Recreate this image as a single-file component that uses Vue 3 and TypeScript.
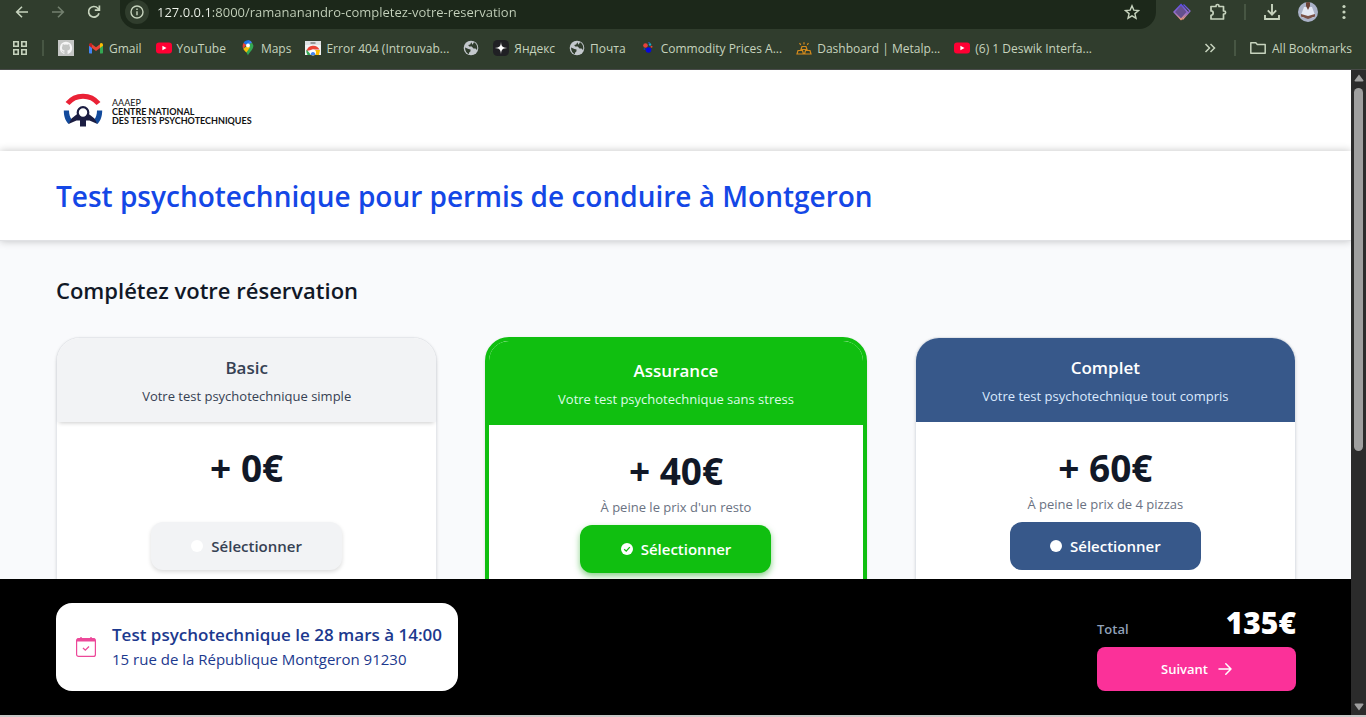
<script setup lang="ts">
import { ref } from 'vue'

interface Bookmark {
  icon: string
  label: string
}

interface Plan {
  id: string
  name: string
  tagline: string
  price: string
  note: string
}

const address = ref('127.0.0.1:8000/ramananandro-completez-votre-reservation')
const selected = ref('assurance')

const bookmarks: Bookmark[] = [
  { icon: 'github', label: '' },
  { icon: 'gmail', label: 'Gmail' },
  { icon: 'youtube', label: 'YouTube' },
  { icon: 'maps', label: 'Maps' },
  { icon: 'store', label: 'Error 404 (Introuvab...' },
  { icon: 'globe', label: '' },
  { icon: 'yandex', label: 'Яндекс' },
  { icon: 'globe', label: 'Почта' },
  { icon: 'dots', label: 'Commodity Prices A...' },
  { icon: 'gold', label: 'Dashboard | Metalp...' },
  { icon: 'youtube', label: '(6) 1 Deswik Interfa...' },
]

const plans: Plan[] = [
  { id: 'basic', name: 'Basic', tagline: 'Votre test psychotechnique simple', price: '+ 0€', note: '' },
  { id: 'assurance', name: 'Assurance', tagline: 'Votre test psychotechnique sans stress', price: '+ 40€', note: "À peine le prix d'un resto" },
  { id: 'complet', name: 'Complet', tagline: 'Votre test psychotechnique tout compris', price: '+ 60€', note: 'À peine le prix de 4 pizzas' },
]
</script>

<template>
  <div class="window">
    <header class="chrome">
      <div class="toolbar">
        <button class="tool" aria-label="Back">
          <svg width="16" height="16" viewBox="0 0 16 16" fill="none" stroke="currentColor" stroke-width="1.6"><path d="M14 8H3M8 2.7 2.7 8 8 13.3" /></svg>
        </button>
        <button class="tool dim" aria-label="Forward">
          <svg width="16" height="16" viewBox="0 0 16 16" fill="none" stroke="currentColor" stroke-width="1.6"><path d="M2 8h11M8 2.7 13.3 8 8 13.3" /></svg>
        </button>
        <button class="tool" aria-label="Reload">
          <svg width="16" height="16" viewBox="0 0 16 16" fill="none" stroke="currentColor" stroke-width="1.7"><path d="M13 9.2A5.3 5.3 0 1 1 11.8 4.2L13.4 5.8" /><path d="M13.4 1.6v4.6H8.8" /></svg>
        </button>
        <div class="omnibox">
          <button class="site-info" aria-label="Site information">
            <svg width="14" height="14" viewBox="0 0 14 14" fill="none" stroke="currentColor" stroke-width="1.4"><circle cx="7" cy="7" r="6" /><path d="M7 6.2v4M7 3.4v1.5" /></svg>
          </button>
          <input v-model="address" class="url" type="text" aria-label="Address" />
          <button class="tool star" aria-label="Bookmark this page">
            <svg width="16" height="16" viewBox="0 0 16 16" fill="none" stroke="currentColor" stroke-width="1.4"><path d="m8 1.8 1.8 4.3 4.7.4-3.6 3.1 1.1 4.6L8 11.8l-4 2.4 1.1-4.6L1.500 6.500l4.700-.4z" /></svg>
          </button>
        </div>
        <div class="extensions">
          <button class="tool" aria-label="Extension">
            <svg width="18" height="18" viewBox="0 0 18 18" fill="none">
              <defs><linearGradient id="ext" x1="0" y1="0" x2="0" y2="1"><stop offset="0" stop-color="#5b4bea" /><stop offset=".6" stop-color="#9a72c8" /><stop offset="1" stop-color="#f09a78" /></linearGradient></defs>
              <path d="M10.500 1.500 17 8 9.500 16.500" stroke="url(#ext)" stroke-width="1.300" />
              <path d="M8 1.500 14.500 9 8 16.500 1 9z" fill="#65508e" stroke="url(#ext)" stroke-width="1.500" />
            </svg>
          </button>
          <button class="tool" aria-label="Extensions">
            <svg width="18" height="18" viewBox="0 0 18 18" fill="none" stroke="currentColor" stroke-width="1.700" stroke-linejoin="round"><path d="M2 3.500h5V3a1.500 1.500 0 0 1 3 0v.5h4.500V8h.6a1.500 1.500 0 0 1 0 3h-.6v5H2v-3.700a2.200 2.200 0 0 0 0-4.400z" /></svg>
          </button>
          <span class="divider"></span>
          <button class="tool" aria-label="Downloads">
            <svg width="18" height="18" viewBox="0 0 18 18" fill="none" stroke="currentColor" stroke-width="1.900"><path d="M9 1v10.500M4.800 7.400 9 11.600l4.200-4.200M2 12v4h14v-4" /></svg>
          </button>
          <button class="tool" aria-label="Profile">
            <svg width="20" height="20" viewBox="0 0 20 20">
              <defs><clipPath id="face"><circle cx="10" cy="10" r="10" /></clipPath></defs>
              <g clip-path="url(#face)"><path fill="#aab2c8" d="M0 0h20v20H0z" /><path fill="#e4e8f4" d="M6 5h8l3 8-2 3H5l-2-3z" /><path fill="#6b4236" d="M8 0h4v4l-2 4-2-4z" /><path fill="#7a5147" d="m3 12 7 2 7-2v2.500L10 17l-7-2.500z" /></g>
            </svg>
          </button>
          <button class="tool" aria-label="Menu">
            <svg width="18" height="18" viewBox="0 0 18 18" fill="currentColor"><circle cx="9" cy="3.500" r="1.600" /><circle cx="9" cy="9" r="1.600" /><circle cx="9" cy="14.500" r="1.600" /></svg>
          </button>
        </div>
      </div>

      <nav class="bookmarks" aria-label="Bookmarks">
        <button class="tool apps" aria-label="Tabs">
          <svg width="14" height="14" viewBox="0 0 14 14" fill="none" stroke="currentColor" stroke-width="1.600"><path d="M.8.8h4.400v4.400H.8zM8.800.8h4.400v4.400H8.800zM.8 8.800h4.400v4.400H.8zM8.800 8.800h4.400v4.400H8.800z" /></svg>
        </button>
        <span class="divider"></span>
        <a v-for="(mark, i) in bookmarks" :key="i" class="mark" href="#" :aria-label="mark.label || mark.icon">
          <svg v-if="mark.icon === 'github'" width="16" height="16" viewBox="0 0 16 16"><path fill="#c4c6c4" d="M0 0h16v16H0z" /><path fill="#f6f6f6" d="M8 1.800a6.300 6.300 0 0 0-2 12.200c.3 0 .4-.1.400-.3v-1.200c-1.700.4-2.100-.8-2.100-.8-.3-.7-.7-.9-.7-.9-.6-.4 0-.4 0-.4.600 0 1 .6 1 .6.500 1 1.400.7 1.800.500 0-.4.200-.7.400-.8-1.400-.2-2.900-.7-2.900-3.100 0-.7.300-1.300.7-1.700 0-.2-.3-.8.1-1.700 0 0 .5-.2 1.700.6a6 6 0 0 1 3.200 0c1.200-.8 1.700-.6 1.700-.6.4.9.1 1.500.1 1.700.4.400.7 1 .7 1.700 0 2.400-1.500 2.900-2.900 3.100.2.200.4.600.4 1.200v1.800c0 .2.100.4.400.3A6.300 6.300 0 0 0 8 1.800z" /></svg>
          <svg v-else-if="mark.icon === 'gmail'" width="16" height="16" viewBox="0 0 16 16"><path fill="#4285f4" d="M1 5v7.500c0 .6.400 1 1 1h2V7z" /><path fill="#34a853" d="M15 5v7.500c0 .6-.4 1-1 1h-2V7z" /><path fill="#ea4335" d="M4 4.200 8 7.200l4-3v3.700l-4 3-4-3z" /><path fill="#c5221f" d="M1 5c0-2 1.800-2.600 3-1.500v4.400L1 5.700z" /><path fill="#fbbc04" d="M15 5c0-2-1.800-2.600-3-1.500v4.400l3-2.200z" /></svg>
          <svg v-else-if="mark.icon === 'youtube'" width="16" height="16" viewBox="0 0 16 16"><rect y="2.500" width="16" height="11" rx="3" fill="#ff0033" /><path fill="#fff" d="M6.400 5.700v4.600L10.500 8z" /></svg>
          <svg v-else-if="mark.icon === 'maps'" width="16" height="16" viewBox="0 0 16 16"><path fill="#34a853" d="M3 8.200C4 10.300 7 11.800 8 15.600c1-3.800 5.400-5.600 5.400-10.200L11.900 2.500z" /><path fill="#fbbc04" d="M6.200 6.800 3.300 9c1 1.600 2.200 2.400 3 3.500L10.300 7z" /><path fill="#4285f4" d="m8 5 4-2.500C11 1 9.500.3 8 .3L6 4z" /><path fill="#1a73e8" d="M8 .3C6 .3 4.300 1.300 3.500 2.900L6 5.500 10 1z" /><path fill="#ea4335" d="M3.500 2.900C2.300 5 2.500 7 3.200 8.700L6.400 5z" /><circle cx="8" cy="5.500" r="2" fill="#fff" /></svg>
          <svg v-else-if="mark.icon === 'store'" width="16" height="16" viewBox="0 0 16 16"><path fill="#f1f3f4" d="M0 1h16v14H0z" /><path fill="#dfe1e4" d="M0 1h16v4H0z" /><path stroke="#666" stroke-width="1.200" d="M5.500 3h5" /><path fill="#ea4335" d="M1.500 11a7 7 0 0 1 13-1.500H8z" /><path fill="#34a853" d="M1.500 9.500 6 15H2.500a6 6 0 0 1-1-5.500z" /><path fill="#fbbc04" d="M15 10H9l-1 5h6z" /><circle cx="8" cy="12.500" r="3" fill="#fff" /><path fill="#4285f4" d="M5.800 15a2.300 2.300 0 1 1 4.400 0z" /></svg>
          <svg v-else-if="mark.icon === 'globe'" width="16" height="16" viewBox="0 0 16 16"><circle cx="8" cy="8" r="7.300" fill="#c3c8cc" /><path fill="#303d2d" d="M2 7.500 5.500 9l2 .5v1.700l-1.500 1.500v1.500C3.500 13 2 11 2 7.500zM8.300 2.200 7.200 4.500l-2 .6 1 1.500 2.500-.2 1.800 2h2l1.500 1.500c1-3.200-.7-6.600-3-7.700L9.500 4.800z" /></svg>
          <svg v-else-if="mark.icon === 'yandex'" width="16" height="16" viewBox="0 0 16 16"><rect width="16" height="16" rx="4.500" fill="#202024" /><path fill="#fff" d="M8 1.800c.4 4.800 1.400 5.800 6.200 6.200-4.800.4-5.800 1.400-6.200 6.200C7.600 9.400 6.600 8.400 1.800 8 6.600 7.600 7.600 6.600 8 1.800z" /></svg>
          <svg v-else-if="mark.icon === 'dots'" width="16" height="16" viewBox="0 0 16 16"><circle cx="5.500" cy="5.500" r="2.300" fill="#e8413c" /><circle cx="8.500" cy="10" r="2.800" fill="#0808dc" /><circle cx="10" cy="4.500" r="1.200" fill="#16a6c9" /><circle cx="11.500" cy="6.800" r="1" fill="#e8413c" /><circle cx="4.500" cy="9" r="1" fill="#0b43b0" /><circle cx="9" cy="2.800" r=".8" fill="#1f60dc" /></svg>
          <svg v-else width="16" height="16" viewBox="0 0 16 16" fill="none" stroke="#d48a1c" stroke-width="1.200"><path d="m5 9.500 1-3h4l1 3zM1 14l1-3.500h4.500l1 3.500zM8.500 14l1-3.500H14l1 3.500zM8 4.500V2.200M4.800 4.800 3.500 3.200M11.200 4.800l1.300-1.600" /></svg>
          <span v-if="mark.label">{{ mark.label }}</span>
        </a>
        <button class="tool more" aria-label="More bookmarks">
          <svg width="12" height="12" viewBox="0 0 12 12" fill="none" stroke="currentColor" stroke-width="1.500"><path d="m1.500 2 4 4-4 4M6.500 2l4 4-4 4" /></svg>
        </button>
        <span class="divider"></span>
        <a class="mark all" href="#">
          <svg width="16" height="16" viewBox="0 0 16 16" fill="none" stroke="currentColor" stroke-width="1.500" stroke-linejoin="round"><path d="M.8 13.200V2.800h5l1.500 1.700h7.900v8.700z" /></svg>
          <span>All Bookmarks</span>
        </a>
      </nav>
    </header>

    <div class="viewport">
      <div class="page">
        <main class="content">
          <div class="brand-bar">
            <a class="brand" href="#">
              <svg width="40" height="36" viewBox="0 0 40 36">
                <path d="M4.500 11.500a20 20 0 0 1 31 0" fill="none" stroke="#ea2236" stroke-width="5" />
                <path d="M.8 18.500h5.200c0 4 1 7 3 9.500L5.500 32C2 28.500.8 23.500.8 18.500zM39.200 18.500H34c0 4-1 7-3 9.500l3.500 4c3.500-3.500 4.700-8.500 4.700-13.500z" fill="#124a9c" />
                <path d="m5.500 32 3-5.500 7-5.500 4.500 5 4.500-5 7 5.500 3 5.500-8-3.500h-3.500V34.500h-6V28.500h-3.500z" fill="#1b1d42" />
                <circle cx="20" cy="20.500" r="5.300" fill="#fff" stroke="#1b1d42" stroke-width="2.200" />
              </svg>
              <span class="brand-text">
                <span class="brand-light">AAAEP</span>
                <span>CENTRE NATIONAL</span>
                <span>DES TESTS PSYCHOTECHNIQUES</span>
              </span>
            </a>
          </div>

          <div class="title-bar">
            <h1>Test psychotechnique pour permis de conduire à Montgeron</h1>
          </div>

          <section class="booking">
            <h2>Complétez votre réservation</h2>
            <div class="plans">
              <article v-for="plan in plans" :key="plan.id" class="plan" :class="plan.id">
                <div class="plan-head">
                  <h3>{{ plan.name }}</h3>
                  <p>{{ plan.tagline }}</p>
                </div>
                <div class="plan-body">
                  <p class="price">{{ plan.price }}</p>
                  <p class="note">{{ plan.note }}</p>
                  <button class="choose" :aria-pressed="selected === plan.id" @click="selected = plan.id">
                    <svg width="12" height="12" viewBox="0 0 12 12">
                      <circle cx="6" cy="6" r="6" fill="#fff" />
                      <path v-if="selected === plan.id" d="m3.200 6.200 2 1.900 3.600-4" fill="none" stroke="#10bf10" stroke-width="1.300" />
                    </svg>
                    <span>Sélectionner</span>
                  </button>
                </div>
              </article>
            </div>
          </section>
        </main>

        <footer class="summary">
          <div class="appointment">
            <svg width="20" height="20" viewBox="0 0 20 20" fill="none" stroke="#ec4899">
              <rect x=".6" y="1.600" width="18.800" height="17.800" rx="2" stroke-width="1.200" />
              <path d="M1 3h18" stroke-width="3" /><path d="M5 0v2M15 0v2" stroke-width="1.400" />
              <path d="m7 11 2.300 2.200L13 9.500" stroke-width="1.300" />
            </svg>
            <div class="details">
              <p class="when">Test psychotechnique le 28 mars à 14:00</p>
              <p class="where">15 rue de la République Montgeron 91230</p>
            </div>
          </div>
          <div class="checkout">
            <div class="total">
              <span class="total-label">Total</span>
              <span class="total-value">135€</span>
            </div>
            <button class="next">
              <span>Suivant</span>
              <svg width="14" height="14" viewBox="0 0 14 14" fill="none" stroke="currentColor" stroke-width="1.500" stroke-linecap="round" stroke-linejoin="round"><path d="M1 7h12M7.800 1.800 13 7l-5.200 5.200" /></svg>
            </button>
          </div>
        </footer>
      </div>
      <div class="scrollbar" aria-hidden="true">
        <svg width="10" height="8" viewBox="0 0 10 8"><path fill="#9f9f9f" d="M5 .5 9.500 6.500q0 1-1 1h-7q-1 0-1-1z" /></svg>
        <span class="thumb"></span>
        <svg width="10" height="8" viewBox="0 0 10 8"><path fill="#9f9f9f" d="M5 7.500.5 1.500q0-1 1-1h7q1 0 1 1z" /></svg>
      </div>
    </div>
  </div>
</template>

<style>
body {
  margin: 0;
}
</style>

<style scoped>
.window,
.window * {
  box-sizing: border-box;
}

.window {
  display: flex;
  flex-direction: column;
  height: 100vh;
  overflow: hidden;
  border-bottom: 2px solid #c9c7c7;
  font-family: "Open Sans", "Noto Sans", sans-serif;
  color: #111827;
}

h1, h2, h3, p {
  margin: 0;
}

button,
input {
  margin: 0;
  padding: 0;
  border: 0;
  background: none;
  font: inherit;
  color: inherit;
}

svg {
  display: block;
  flex: none;
}

a {
  color: inherit;
  text-decoration: none;
}

/* Browser toolbar */
.chrome {
  flex: none;
  background: #303d2d;
  border-bottom: 1px solid #484b49;
  color: #c6d3bd;
  font-size: 12px;
}

.toolbar {
  display: flex;
  height: 29px;
  padding-left: 4px;
}

.tool {
  display: flex;
  flex: none;
  align-items: center;
  justify-content: center;
  width: 36px;
  height: 24px;
}

.dim {
  color: #73806f;
}

.omnibox {
  display: flex;
  flex: 1;
  margin-left: 8px;
  padding-left: 5px;
  padding-right: 6px;
  border-radius: 0 0 17px 17px;
  background: #1c281a;
}

.site-info {
  display: flex;
  flex: none;
  align-items: center;
  justify-content: center;
  width: 24px;
  height: 24px;
  border-radius: 12px;
  background: #303d2d;
}

/* The host name is brighter than the port and path that follow it */
.url {
  flex: 1;
  min-width: 0;
  height: 24px;
  margin-left: 8px;
  font-size: 13px;
  background: linear-gradient(90deg, #f2f7ee 55px, #c6d3bd 55px);
  background-clip: text;
  color: transparent;
}

.extensions {
  display: flex;
  align-items: flex-start;
  padding-left: 8px;
  padding-right: 4px;
}

.divider {
  flex: none;
  width: 2px;
  height: 16px;
  margin: 4px 8px;
  background: #475643;
}

.bookmarks {
  display: flex;
  align-items: center;
  height: 40px;
  padding: 0 14px 2px 2px;
}

.mark {
  display: flex;
  flex: none;
  align-items: center;
  gap: 5px;
  margin-right: 14px;
  white-space: nowrap;
}

.bookmarks > .divider {
  margin: 0 14px 0 4px;
}

.more {
  width: 24px;
  margin-left: auto;
  margin-right: 8px;
}

.all {
  gap: 6px;
  margin-right: 0;
}

/* Web page */
.viewport {
  display: flex;
  flex: 1;
  min-height: 0;
}

.page {
  display: flex;
  flex: 1;
  flex-direction: column;
  min-width: 0;
  background: #f9fafc;
}

.content {
  flex: 1;
  min-height: 0;
  overflow: hidden;
}

.brand-bar {
  height: 81px;
  padding: 22px 63px;
  background: #fff;
}

.brand {
  display: inline-flex;
  align-items: center;
  gap: 9px;
}

.brand-text {
  display: flex;
  flex-direction: column;
  padding-top: 3px;
  font-family: Lato, sans-serif;
  font-size: 9px;
  font-weight: 700;
  line-height: 9px;
  color: #111;
}

.brand-light {
  font-weight: 400;
}

.title-bar {
  position: relative;
  padding: 25px 56px 23px;
  border-bottom: 1px solid #e0e1e4;
  background: #fff;
  box-shadow: 0 0 8px rgba(0, 0, 0, 0.24);
}

h1 {
  font-size: 28px;
  font-weight: 600;
  line-height: 41px;
  color: #1447e6;
}

.booking {
  padding: 32px 55px 32px 56px;
}

h2 {
  margin-bottom: 30px;
  font-size: 22px;
  font-weight: 600;
  line-height: 34px;
}

.plans {
  display: grid;
  grid-template-columns: repeat(3, 1fr);
  align-items: start;
  gap: 48px;
}

.plan {
  height: 400px;
  border: 1px solid #e5e7eb;
  border-radius: 24px;
  background: #fff;
  box-shadow: 0 1px 3px rgba(0, 0, 0, 0.12);
  text-align: center;
}

.plan-head {
  padding: 16px;
  border-radius: 23px 23px 0 0;
}

h3 {
  font-size: 17px;
  font-weight: 600;
  line-height: 28px;
}

.plan-head p {
  margin-top: 4px;
  font-size: 13px;
  line-height: 20px;
}

.basic .plan-head {
  background: #f2f3f5;
  box-shadow: 0 3px 4px -2px rgba(0, 0, 0, 0.2);
  color: #364153;
}

.assurance {
  border: 4px solid #10bf10;
}

.assurance .plan-head {
  border-radius: 20px 20px 0 0;
  background: #10bf10;
  color: #fff;
}

.assurance .plan-head p {
  color: #dcfce7;
}

.complet {
  border-color: #e2e5ea;
}

.complet .plan-head {
  background: #37588a;
  color: #fff;
}

.complet .plan-head p {
  color: #dbeafe;
}

.plan-body {
  display: flex;
  flex-direction: column;
  align-items: center;
  padding: 24px;
}

.price {
  margin-bottom: 4px;
  font-size: 37px;
  font-weight: 700;
  line-height: 44px;
}

.note {
  min-height: 20px;
  margin-bottom: 8px;
  font-size: 13px;
  line-height: 20px;
  color: #6a7282;
}

.choose {
  display: flex;
  align-items: center;
  justify-content: center;
  gap: 8px;
  min-width: 191px;
  height: 48px;
  border-radius: 12px;
  font-size: 15px;
  font-weight: 600;
}

.basic .choose {
  background: #f2f3f5;
  box-shadow: 0 2px 4px rgba(0, 0, 0, 0.14);
  color: #364153;
}

.assurance .choose {
  background: #10bf10;
  box-shadow: 0 3px 6px rgba(16, 160, 16, 0.5);
  color: #fff;
}

.complet .choose {
  background: #37588a;
  color: #fff;
}

/* Order summary */
.summary {
  display: flex;
  flex: none;
  justify-content: space-between;
  padding: 24px 55px 24px 56px;
  background: #000;
}

.appointment {
  display: flex;
  align-items: center;
  gap: 16px;
  padding: 18px 16px 18px 20px;
  border-radius: 16px;
  background: #fff;
  color: #1c398e;
}

.details {
  padding-bottom: 4px;
}

.when {
  font-size: 17px;
  font-weight: 600;
  line-height: 28px;
}

.where {
  font-size: 15px;
  line-height: 20px;
}

.checkout {
  width: 199px;
}

.total {
  display: flex;
  align-items: baseline;
  justify-content: space-between;
  height: 44px;
}

.total-label {
  font-size: 13px;
  font-weight: 600;
  color: #90a1b9;
}

.total-value {
  font-size: 30px;
  font-weight: 800;
  line-height: 40px;
  color: #fff;
}

.next {
  display: flex;
  align-items: center;
  justify-content: center;
  gap: 10px;
  width: 100%;
  height: 44px;
  border-radius: 8px;
  background: #fb3199;
  font-size: 13px;
  font-weight: 600;
  color: #fff;
}

/* Scroll bar */
.scrollbar {
  display: flex;
  flex: none;
  flex-direction: column;
  align-items: center;
  justify-content: space-between;
  width: 15px;
  padding: 4px 0;
  background: #2b2b2b;
}

.thumb {
  width: 9px;
  height: 57%;
  margin-top: 6px;
  margin-bottom: auto;
  border-radius: 5px;
  background: #9f9f9f;
}
</style>
